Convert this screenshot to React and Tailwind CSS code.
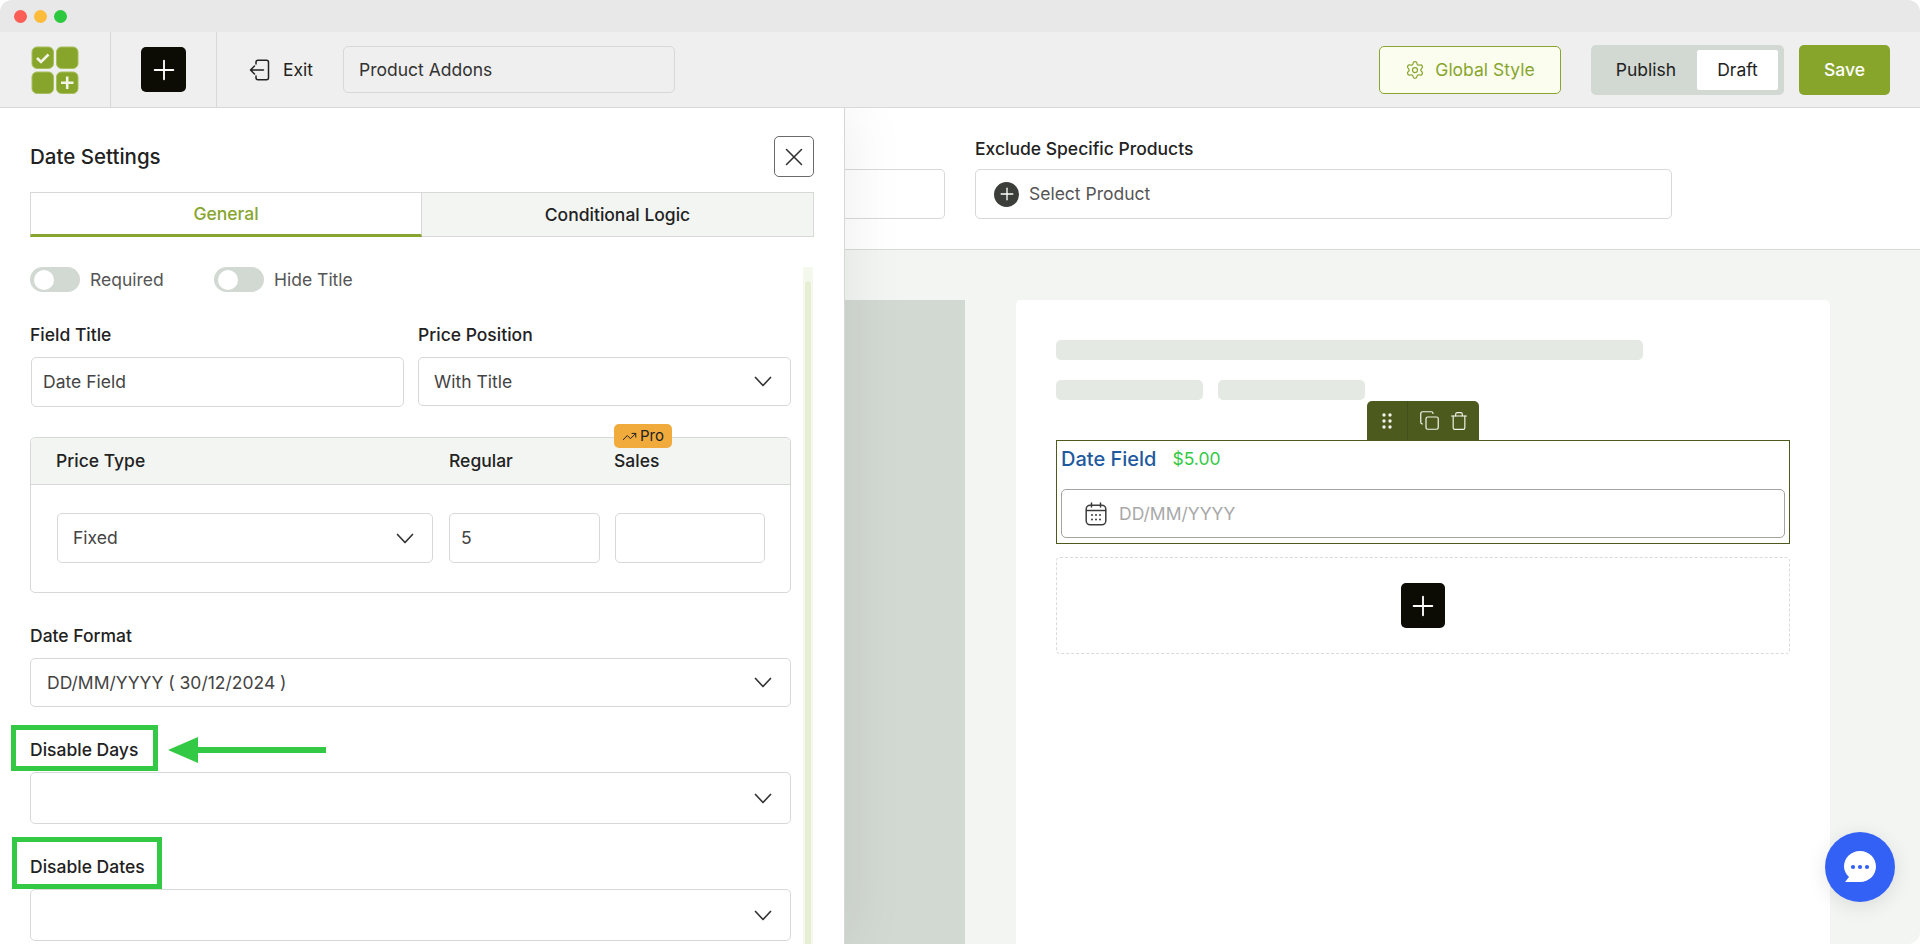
import React from "react";
import { X, Settings, Plus, Copy, Trash, TrendingUp } from "lucide-react";

function Chevron() {
  return (
    <svg width="18" height="11" viewBox="0 0 18 11" fill="none" stroke="#333" strokeWidth="1.7" strokeLinecap="round" strokeLinejoin="round">
      <path d="M1.5 1.5 9 9.5l7.5-8" />
    </svg>
  );
}

function SelectBox({ children, className }) {
  return (
    <div className={"flex items-center justify-between border border-[#d6d9d6] rounded-[5px] bg-white pr-[18px] text-[#444] " + className}>
      <span className="pt-[1px]">{children}</span>
      <Chevron />
    </div>
  );
}

function Toggle({ label, className }) {
  return (
    <div className={"flex items-center gap-[10px] " + className}>
      <div className="w-[50px] h-[25px] rounded-full bg-[#d2d8d2] flex items-center pl-[4px]">
        <div className="w-[20px] h-[20px] rounded-full bg-white" />
      </div>
      <span className="text-[#555] pt-[1px]">{label}</span>
    </div>
  );
}

function Logo() {
  return (
    <svg width="48" height="48" viewBox="0 0 48 48">
      <g fill="#88a52b" stroke="#a7bf5f" strokeWidth="1">
        <rect x="1" y="1" width="21.5" height="21.5" rx="5" />
        <rect x="25.5" y="1" width="21.5" height="21.5" rx="5" />
        <rect x="1" y="26" width="21.5" height="21.5" rx="5" />
        <rect x="25.5" y="26" width="21.5" height="21.5" rx="5" />
      </g>
      <path d="M6 12l4 4 7.5-7.5" fill="none" stroke="#f2f5e6" strokeWidth="2.6" />
      <path d="M36.2 30.5v12.5M30 36.7h12.5" fill="none" stroke="#f2f5e6" strokeWidth="2.6" />
    </svg>
  );
}

function ExitIcon() {
  return (
    <svg width="22" height="22" viewBox="0 0 22 22" fill="none" stroke="#222" strokeWidth="1.5" strokeLinecap="round" strokeLinejoin="round">
      <path d="M7 5V3.2a2 2 0 0 1 2-2h8.5a2 2 0 0 1 2 2v15.6a2 2 0 0 1-2 2H9a2 2 0 0 1-2-2V17" />
      <path d="M14.5 11H1.5M5.5 7l-4 4 4 4" />
    </svg>
  );
}

function CalendarIcon() {
  return (
    <svg width="22" height="24" viewBox="0 0 22 24" fill="none" stroke="#3d3d3d" strokeWidth="1.5" strokeLinecap="round">
      <rect x="1.2" y="3.2" width="19.6" height="19.6" rx="4" />
      <path d="M6.5 1v4M15.5 1v4M1.5 8.5h19" />
      <g fill="#3d3d3d" stroke="none">
        <circle cx="7" cy="13" r="1" /><circle cx="11" cy="13" r="1" /><circle cx="15" cy="13" r="1" />
        <circle cx="7" cy="17.5" r="1" /><circle cx="11" cy="17.5" r="1" /><circle cx="15" cy="17.5" r="1" />
      </g>
    </svg>
  );
}

function GripIcon() {
  return (
    <svg width="10" height="16" viewBox="0 0 10 16" fill="#f1f3e8">
      <circle cx="2" cy="2" r="1.7" /><circle cx="8" cy="2" r="1.7" />
      <circle cx="2" cy="8" r="1.7" /><circle cx="8" cy="8" r="1.7" />
      <circle cx="2" cy="14" r="1.7" /><circle cx="8" cy="14" r="1.7" />
    </svg>
  );
}

export default function App() {
  return (
    <div className="relative w-[1920px] h-[944px] overflow-hidden rounded-[12px] bg-white text-[17.5px] text-[#222]" style={{ fontFamily: "Inter, 'Noto Sans', sans-serif" }}>
      {/* title bar */}
      <div className="relative z-20 h-[32px] bg-[#e8e8e8] flex items-center gap-[7px] pl-[14px]">
        <div className="w-[13px] h-[13px] rounded-full bg-[#fb5d57]" />
        <div className="w-[13px] h-[13px] rounded-full bg-[#fdbb3c]" />
        <div className="w-[13px] h-[13px] rounded-full bg-[#2cc840]" />
      </div>

      {/* header */}
      <div className="relative z-20 h-[76px] bg-[#efefef] border-b border-[#d8d8d8] flex items-center pr-[30px]">
        <div className="w-[111px] h-full flex items-center justify-center border-r border-[#d8d8d8]">
          <Logo />
        </div>
        <div className="w-[106px] h-full flex items-center justify-center border-r border-[#d8d8d8]">
          <div className="w-[45px] h-[45px] rounded-[5px] bg-[#0c0c04] flex items-center justify-center">
            <Plus size={32} color="#fff" strokeWidth={1.4} />
          </div>
        </div>
        <div className="flex items-center gap-[12px] ml-[32px] text-[#222]">
          <ExitIcon />
          <span className="pt-[1px]">Exit</span>
        </div>
        <div className="ml-[30px] w-[332px] h-[47px] flex items-center pl-[15px] pt-[1px] border border-[#d8d8d8] rounded-[5px] text-[#333]">
          Product Addons
        </div>
        <div className="ml-auto w-[182px] h-[48px] flex items-center justify-center gap-[10px] pt-[1px] border border-[#88a52f] rounded-[5px] bg-[#fbfeee] text-[#88a52f]">
          <Settings size={20} strokeWidth={1.5} />
          <span>Global Style</span>
        </div>
        <div className="ml-[30px] w-[193px] h-[50px] rounded-[5px] bg-[#d2d8d2] flex items-center pr-[6px]">
          <span className="flex-1 text-center pt-[1px] pl-[4px]">Publish</span>
          <span className="w-[81px] h-[40px] bg-white flex items-center justify-center rounded-[2px] pt-[1px]">Draft</span>
        </div>
        <div className="ml-[15px] w-[91px] h-[50px] rounded-[5px] bg-[#88a52b] text-white flex items-center justify-center pt-[1px] font-medium">
          Save
        </div>
      </div>

      {/* body */}
      <div className="flex h-[836px]">
        {/* settings panel */}
        <div className="relative z-10 w-[845px] flex-none bg-white border-r border-[#d6d6d6] shadow-[0_0_60px_rgba(0,0,0,0.08)] pt-[28px] pl-[30px] overflow-hidden">
          <div className="w-[784px] h-[41px] flex items-center justify-between">
            <span className="text-[20.5px] font-[450] pt-[1px]">Date Settings</span>
            <div className="w-[40px] h-[41px] border border-[#6b6b6b] rounded-[5px] flex items-center justify-center">
              <X size={30} strokeWidth={1.25} color="#333" />
            </div>
          </div>

          <div className="w-[784px] h-[45px] mt-[15px] flex">
            <div className="w-[392px] flex items-center justify-center pt-[2px] border border-[#d8d8d8] border-b-[3px] border-b-[#88a52f] text-[#88a52f] font-[450]">
              General
            </div>
            <div className="flex-1 flex items-center justify-center pt-[2px] border border-l-0 border-[#d8d8d8] bg-[#f3f5f2] font-[450]">
              Conditional Logic
            </div>
          </div>

          <div className="flex mt-[30px]">
            <div className="w-[761px] flex-none">
              <div className="flex h-[25px]">
                <Toggle label="Required" className="w-[184px]" />
                <Toggle label="Hide Title" />
              </div>

              <div className="grid grid-cols-[388px_373px] mt-[31px]">
                <div>
                  <div className="h-[24px] flex items-center pt-[1px] font-[450]">Field Title</div>
                  <div className="mt-[10px] ml-[1px] w-[373px] h-[50px] flex items-center pl-[11px] pt-[1px] border border-[#d6d9d6] rounded-[5px] text-[#444]">Date Field</div>
                </div>
                <div>
                  <div className="h-[24px] flex items-center pt-[1px] font-[450]">Price Position</div>
                  <SelectBox className="mt-[10px] h-[49px] pl-[15px]">With Title</SelectBox>
                </div>
              </div>

              <div className="mt-[30px] h-[156px] border border-[#d6d9d6] rounded-[5px]">
                <div className="h-[47px] flex items-center pt-[1px] bg-[#f3f5f2] border-b border-[#d6d9d6] rounded-t-[5px] font-[450] pl-[25px]">
                  <span className="w-[393px]">Price Type</span>
                  <span className="w-[165px]">Regular</span>
                  <span className="relative">
                    Sales
                    <span className="absolute left-0 top-[-24px] w-[58px] h-[24px] flex items-center justify-center gap-[3px] rounded-[5px] bg-[#f0ab3c] text-[15px] font-normal">
                      <TrendingUp size={15} strokeWidth={1.6} />
                      Pro
                    </span>
                  </span>
                </div>
                <div className="flex mt-[28px] pl-[26px]">
                  <SelectBox className="w-[376px] h-[50px] pl-[15px]">Fixed</SelectBox>
                  <div className="ml-[16px] w-[151px] h-[50px] flex items-center pl-[11px] pt-[1px] border border-[#d6d9d6] rounded-[5px] text-[#444]">5</div>
                  <div className="ml-[15px] w-[150px] h-[50px] border border-[#d6d9d6] rounded-[5px]" />
                </div>
              </div>

              <div className="h-[24px] mt-[31px] flex items-center pt-[1px] font-[450]">Date Format</div>
              <SelectBox className="mt-[10px] h-[49px] pl-[16px]">DD/MM/YYYY ( 30/12/2024 )</SelectBox>

              <div className="relative h-[24px] mt-[31px] flex items-center pt-[1px] font-[450]">
                Disable Days
                <div className="absolute left-[-19px] top-[-13px] w-[147px] h-[46px] border-[5px] border-[#34c944]" />
                <svg className="absolute left-[138px] top-[-1px]" width="158" height="26" viewBox="0 0 158 26">
                  <path d="M0 13 30 0v10h128v6H30V26z" fill="#34c944" />
                </svg>
              </div>
              <SelectBox className="mt-[10px] h-[52px]"> </SelectBox>

              <div className="relative h-[24px] mt-[31px] flex items-center pt-[1px] font-[450]">
                Disable Dates
                <div className="absolute left-[-18px] top-[-18px] w-[150px] h-[52px] border-[5px] border-[#34c944]" />
              </div>
              <SelectBox className="mt-[10px] h-[52px]"> </SelectBox>
            </div>

            <div className="ml-[12px] w-[10px] h-[720px] bg-[#f5f8ec] flex justify-center">
              <div className="w-[6px] h-full mt-[14px] rounded-full bg-[#e7eed4]" />
            </div>
          </div>
        </div>

        {/* main */}
        <div className="flex-1 flex flex-col min-w-0">
          <div className="h-[142px] flex-none flex border-b border-[#d8dad8] pt-[28px] bg-white">
            <div className="w-[100px] h-[50px] mt-[33px] border border-l-0 border-[#d6d9d6] rounded-r-[5px]" />
            <div className="ml-[30px] w-[697px]">
              <div className="h-[24px] flex items-center pt-[2px] font-[450]">Exclude Specific Products</div>
              <div className="mt-[9px] h-[50px] flex items-center pl-[18px] gap-[10px] border border-[#d6d9d6] rounded-[5px] text-[#555]">
                <div className="w-[25px] h-[25px] rounded-full bg-[#3c3e3a] flex items-center justify-center">
                  <Plus size={20} color="#fff" strokeWidth={1.6} />
                </div>
                <span className="pt-[1px]">Select Product</span>
              </div>
            </div>
          </div>

          <div className="flex-1 bg-[#f3f5f2] pt-[50px] flex min-h-0">
            <div className="w-[120px] flex-none bg-[#d2d8d2]" />
            <div className="ml-[51px] w-[814px] flex-none bg-white rounded-t-[5px] pl-[40px] pr-[40px] pt-[40px]">
              <div className="w-[587px] h-[20px] rounded-[5px] bg-[#e4e9e3]" />
              <div className="flex gap-[15px] mt-[20px]">
                <div className="w-[147px] h-[20px] rounded-[5px] bg-[#e4e9e3]" />
                <div className="w-[147px] h-[20px] rounded-[5px] bg-[#e4e9e3]" />
              </div>

              <div className="mx-auto mt-[1px] w-[112px] h-[39px] flex rounded-t-[5px] bg-[#4d5a1e]">
                <div className="w-[41px] flex items-center justify-center border-r border-[#434f18]">
                  <GripIcon />
                </div>
                <div className="flex-1 flex items-center justify-center gap-[9px] text-[#f1f3e8]">
                  <Copy size={21} strokeWidth={1.4} />
                  <Trash size={20} strokeWidth={1.4} />
                </div>
              </div>

              <div className="h-[104px] border border-[#4d5a1e] px-[4px]">
                <div className="h-[36px] flex items-center gap-[16px]">
                  <span className="text-[#1f5a9e] text-[20px] font-[450]">Date Field</span>
                  <span className="text-[#34c944]">$5.00</span>
                </div>
                <div className="mt-[12px] h-[49px] flex items-center gap-[12px] pl-[23px] border border-[#a3a3a3] rounded-[5px] text-[#a8a8a8]">
                  <CalendarIcon />
                  <span className="pt-[1px]">DD/MM/YYYY</span>
                </div>
              </div>

              <div className="mt-[13px] h-[97px] border border-dashed border-[#d8dcd8] rounded-[4px] flex items-center justify-center">
                <div className="w-[44px] h-[45px] rounded-[5px] bg-[#0c0c04] flex items-center justify-center">
                  <Plus size={32} color="#fff" strokeWidth={1.4} />
                </div>
              </div>
            </div>
          </div>
        </div>
      </div>

      {/* chat */}
      <div className="absolute z-20 left-[1825px] top-[832px] w-[70px] h-[70px] rounded-full bg-[#3461f5] shadow-[0_4px_20px_rgba(0,0,0,0.1)] flex items-center justify-center">
        <svg width="34" height="34" viewBox="0 0 34 34">
          <path d="M17 1c9 0 16 7 16 15.5S26 32 17 32H2l4-5C3 24 1 21 1 16.5 1 8 8 1 17 1z" fill="#fff" />
          <circle cx="10" cy="17" r="2.1" fill="#3461f5" />
          <circle cx="17" cy="17" r="2.1" fill="#3461f5" />
          <circle cx="24" cy="17" r="2.1" fill="#3461f5" />
        </svg>
      </div>
    </div>
  );
}
